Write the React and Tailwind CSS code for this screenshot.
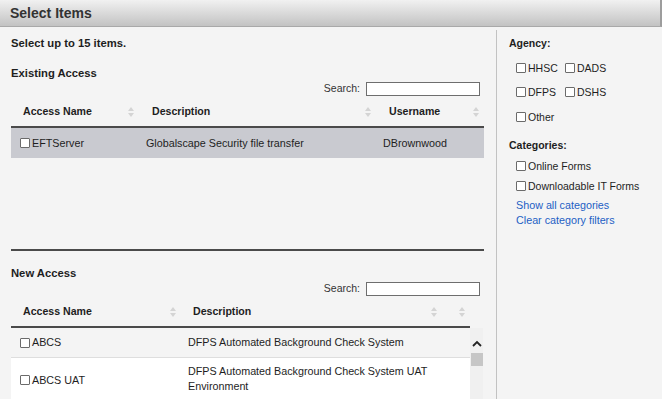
import React from "react";

const SortIcon = () => (
  <svg width="6" height="10" viewBox="0 0 6 10" className="shrink-0">
    <path d="M3 0 L6 4 L0 4 Z" fill="#d4d4d4" />
    <path d="M3 10 L6 6 L0 6 Z" fill="#d4d4d4" />
  </svg>
);

const Box = () => (
  <span className="inline-block w-[10px] h-[10px] border border-[#6b6b6b] bg-white rounded-[1px] shrink-0" />
);

const Check = ({ label, className = "" }) => (
  <label className={`flex items-center gap-[2px] ${className}`}>
    <Box />
    <span>{label}</span>
  </label>
);

const SearchRow = () => (
  <div className="flex items-center justify-end h-[14px] pr-[4px]">
    <span className="text-[10.5px] text-[#333] mr-[6px]">Search:</span>
    <span className="w-[114px] h-[14px] border border-[#6e6e6e] bg-white" />
  </div>
);

export default function App() {
  return (
    <div className="w-[662px] h-[399px] overflow-hidden bg-[#f4f4f4] font-['Liberation_Sans',Arial,sans-serif] text-[#1e1e1e]">
      {/* title bar */}
      <div className="h-[27px] flex items-center pl-[10px] bg-gradient-to-b from-[#f1f1f1] to-[#c3c3c3] border-b border-[#a9a9a9] border-r-2 border-r-[#9d9d9d]">
        <span className="text-[14px] font-bold text-[#333]">Select Items</span>
      </div>

      <div className="flex h-[372px]">
        {/* left column */}
        <div className="w-[496px] pl-[11px] pr-[12px] pt-[9px]">
          <div className="text-[11.25px] font-bold leading-[14px]">Select up to 15 items.</div>

          <div className="mt-[16px] text-[11.25px] font-bold leading-[14px]">Existing Access</div>
          <div className="mt-[2px]">
            <SearchRow />
          </div>

          {/* existing access table */}
          <div className="flex h-[32px] pt-[2px] items-center border-b-2 border-[#4a4a4a] text-[10.6px] font-bold">
            <div className="w-[129px] flex items-center justify-between pl-[12px] pr-[6px]">
              <span>Access Name</span>
              <SortIcon />
            </div>
            <div className="w-[236px] flex items-center justify-between pl-[12px] pr-[5px]">
              <span>Description</span>
              <SortIcon />
            </div>
            <div className="flex-1 flex items-center justify-between pl-[13px] pr-[5px]">
              <span>Username</span>
              <SortIcon />
            </div>
          </div>
          <div className="h-[123px] border-b-2 border-[#4a4a4a]">
            <div className="flex h-[30px] items-center bg-[#c9cad0] text-[10.75px]">
              <div className="w-[129px] pl-[9px]">
                <Check label="EFTServer" />
              </div>
              <div className="w-[243px] pl-[6px]">Globalscape Security file transfer</div>
              <div className="flex-1">DBrownwood</div>
            </div>
          </div>

          <div className="mt-[15px] text-[11.25px] font-bold leading-[14px]">New Access</div>
          <div className="mt-[2px]">
            <SearchRow />
          </div>

          {/* new access table */}
          <div className="flex h-[32px] pt-[2px] w-[459px] items-center border-b-2 border-[#4a4a4a] text-[10.6px] font-bold">
            <div className="w-[171px] flex items-center justify-between pl-[12px] pr-[6px]">
              <span>Access Name</span>
              <SortIcon />
            </div>
            <div className="w-[260px] flex items-center justify-between pl-[11px] pr-[5px]">
              <span>Description</span>
              <SortIcon />
            </div>
            <div className="flex-1 flex items-center justify-end pr-[5px]">
              <SortIcon />
            </div>
          </div>
          <div className="flex">
            <div className="w-[459px] text-[10.75px]">
              <div className="flex h-[30px] items-center border-b border-[#dedede]">
                <div className="w-[171px] pl-[9px]">
                  <Check label="ABCS" />
                </div>
                <div className="flex-1 pl-[6px]">DFPS Automated Background Check System</div>
              </div>
              <div className="flex h-[60px] bg-white pt-[6px]">
                <div className="w-[171px] pl-[9px] pt-[8px]">
                  <Check label="ABCS UAT" />
                </div>
                <div className="flex-1 pl-[6px] leading-[15px]">
                  DFPS Automated Background Check System UAT
                  <br />
                  Environment
                </div>
              </div>
            </div>
            <div className="w-[13px] h-[80px] bg-[#f0f0f0] flex flex-col items-center">
              <svg width="10" height="7" viewBox="0 0 10 7" className="mt-[12px]">
                <path d="M1 6 L5 2 L9 6" stroke="#222" strokeWidth="1.8" fill="none" />
              </svg>
              <div className="mt-[6px] w-[12px] h-[13px] bg-[#c6c6c6]" />
            </div>
          </div>
        </div>

        {/* right column: filters */}
        <div className="flex-1 mt-[3px] border-l border-[#c2c2c2] pl-[12px] pt-[6px] text-[10.5px]">
          <div className="font-bold leading-[14px]">Agency:</div>
          <div className="pl-[7px] mt-[11px] leading-[14px]">
            <div className="flex items-center">
              <Check label="HHSC" className="w-[49px]" />
              <Check label="DADS" />
            </div>
            <div className="flex items-center mt-[10px]">
              <Check label="DFPS" className="w-[49px]" />
              <Check label="DSHS" />
            </div>
            <div className="flex items-center mt-[11px]">
              <Check label="Other" />
            </div>
          </div>
          <div className="font-bold leading-[14px] mt-[14px]">Categories:</div>
          <div className="pl-[7px] mt-[7px] leading-[14px]">
            <Check label="Online Forms" />
            <Check label="Downloadable IT Forms" className="mt-[6px]" />
          </div>
          <div className="pl-[7px] mt-[5px] leading-[15px] text-[10.75px] text-[#1d5fc4]">
            <div>Show all categories</div>
            <div>Clear category filters</div>
          </div>
        </div>
      </div>
    </div>
  );
}
